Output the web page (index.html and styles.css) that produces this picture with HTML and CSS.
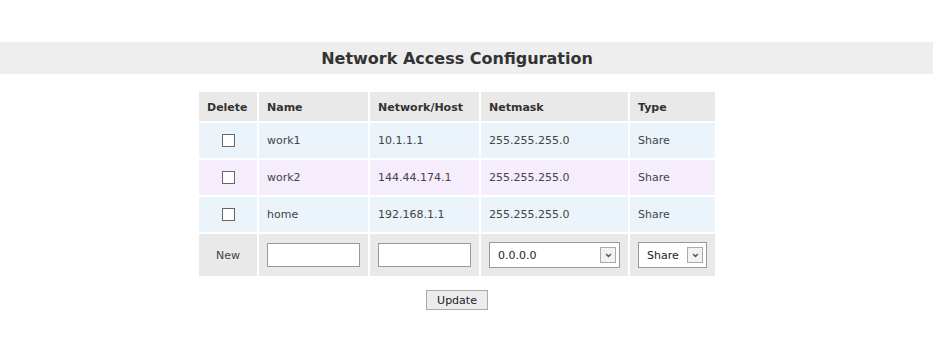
FILE: index.html
```html
<!DOCTYPE html>
<html lang="en">
<head>
  <meta charset="UTF-8">
  <title>Network Access Configuration</title>
  <link rel="stylesheet" href="styles.css">
</head>
<body>
  <h1 class="title-bar">Network Access Configuration</h1>
  <form class="access-form" action="/access" method="POST">
    <table class="access-table">
      <thead>
        <tr>
          <th class="col-delete">Delete</th>
          <th class="col-name">Name</th>
          <th class="col-net">Network/Host</th>
          <th class="col-mask">Netmask</th>
          <th class="col-type">Type</th>
        </tr>
      </thead>
      <tbody>
        <tr class="row-blue">
          <td class="center"><input type="checkbox" name="del0"></td>
          <td>work1</td>
          <td>10.1.1.1</td>
          <td>255.255.255.0</td>
          <td>Share</td>
        </tr>
        <tr class="row-purple">
          <td class="center"><input type="checkbox" name="del1"></td>
          <td>work2</td>
          <td>144.44.174.1</td>
          <td>255.255.255.0</td>
          <td>Share</td>
        </tr>
        <tr class="row-blue">
          <td class="center"><input type="checkbox" name="del2"></td>
          <td>home</td>
          <td>192.168.1.1</td>
          <td>255.255.255.0</td>
          <td>Share</td>
        </tr>
        <tr class="row-new">
          <td class="center">New</td>
          <td><input type="text" class="text-field" name="name"></td>
          <td><input type="text" class="text-field" name="host"></td>
          <td>
            <div class="select-wrap mask-select">
              <select name="mask">
                <option>0.0.0.0</option>
                <option>255.0.0.0</option>
                <option>255.255.0.0</option>
                <option>255.255.255.0</option>
                <option>255.255.255.255</option>
              </select>
              <span class="select-arrow">
                <svg width="7" height="5" viewBox="0 0 7 5"><path d="M1 1 L3.5 3.5 L6 1" fill="none" stroke="#555" stroke-width="1.4"/></svg>
              </span>
            </div>
          </td>
          <td>
            <div class="select-wrap type-select">
              <select name="type">
                <option>Share</option>
                <option>Deny</option>
              </select>
              <span class="select-arrow">
                <svg width="7" height="5" viewBox="0 0 7 5"><path d="M1 1 L3.5 3.5 L6 1" fill="none" stroke="#555" stroke-width="1.4"/></svg>
              </span>
            </div>
          </td>
        </tr>
      </tbody>
    </table>
    <div class="actions">
      <button type="submit" class="btn">Update</button>
    </div>
  </form>
</body>
</html>
```

FILE: styles.css
```css
body {
  margin: 0;
  font-family: "DejaVu Sans", Verdana, sans-serif;
  font-size: 11px;
  color: #444;
  background-color: #fff;
}
.title-bar {
  margin: 42px 0 0;
  padding: 1px 19px 0 0;
  height: 31px;
  line-height: 32px;
  background-color: #eee;
  color: #333;
  font-size: 16px;
  font-weight: bold;
  text-align: center;
}
.access-form {
  width: 914px;
  margin-top: 16px;
}
.access-table {
  margin: 0 auto;
  border-collapse: separate;
  border-spacing: 2px;
}
.access-table th,
.access-table td {
  padding: 0 8px;
  text-align: left;
  vertical-align: middle;
}
.access-table th {
  height: 27px;
  padding-top: 2px;
  background-color: #e9e9e9;
  color: #333;
  font-weight: bold;
}
.access-table td {
  height: 35px;
}
.col-delete { width: 42px; }
.col-name { width: 93px; }
.col-net { width: 93px; }
.col-mask { width: 131px; }
.col-type { width: 69px; }
.access-table .center {
  text-align: center;
  padding: 0;
}
.row-blue td {
  background-color: #ebf4fb;
}
.row-purple td {
  background-color: #f5edfc;
}
.row-new td {
  height: 42px;
  background-color: #e9e9e9;
}
input[type="checkbox"] {
  appearance: none;
  width: 13px;
  height: 13px;
  margin: 0;
  vertical-align: middle;
  border: 1px solid #666;
  background-color: #fff;
}
.text-field {
  box-sizing: border-box;
  display: block;
  width: 93px;
  height: 24px;
  margin: 0;
  border: 1px solid #999;
  background-color: #fff;
}
.select-wrap {
  position: relative;
}
.select-wrap select {
  appearance: none;
  box-sizing: border-box;
  display: block;
  width: 100%;
  height: 26px;
  margin: 0;
  padding: 0 0 0 8px;
  border: 1px solid #999;
  border-radius: 0;
  background-color: #fff;
  color: #222;
  font-family: "DejaVu Sans", Verdana, sans-serif;
  font-size: 11px;
}
.mask-select { width: 131px; }
.type-select { width: 69px; }
.select-arrow {
  position: absolute;
  top: 5px;
  right: 4px;
  width: 14px;
  height: 14px;
  display: flex;
  align-items: center;
  justify-content: center;
  border: 1px solid #aaa;
  background-color: #f2f2f2;
  pointer-events: none;
}
.actions {
  margin-top: 12px;
  text-align: center;
}
.btn {
  width: 62px;
  height: 20px;
  padding: 0;
  border: 1px solid #aaa;
  background-color: #ececec;
  color: #222;
  font-family: "DejaVu Sans", Verdana, sans-serif;
  font-size: 11px;
}
```
